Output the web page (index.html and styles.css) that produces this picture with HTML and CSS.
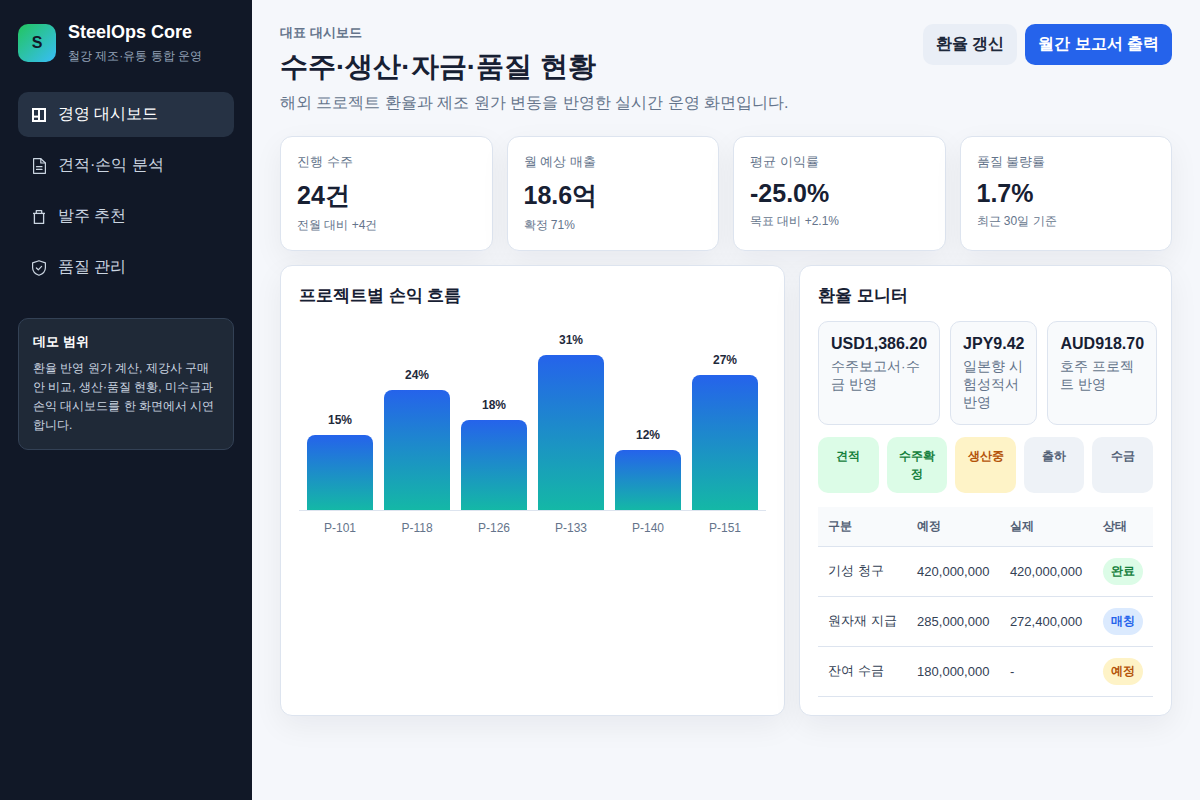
FILE: index.html
```html
<!DOCTYPE html>
<html lang="ko">
<head>
<meta charset="utf-8">
<title>SteelOps Core</title>
<link rel="stylesheet" href="styles.css">
</head>
<body>
<div class="app">
  <aside class="sidebar">
    <div class="brand">
      <div class="logo">S</div>
      <div class="brand-text">
        <div class="brand-name">SteelOps Core</div>
        <div class="brand-sub">철강 제조·유통 통합 운영</div>
      </div>
    </div>
    <nav class="nav">
      <a class="nav-item active">
        <svg class="nav-icon" viewBox="0 0 16 16" fill="none" stroke="currentColor" stroke-width="2"><path d="M2 2h12v12h-12z"/><path d="M8 2v12"/><path d="M2 9.6h6"/></svg>
        <span>경영 대시보드</span>
      </a>
      <a class="nav-item">
        <svg class="nav-icon" viewBox="0 0 16 16" fill="none" stroke="currentColor" stroke-width="1.2" stroke-linejoin="round" stroke-linecap="round"><path d="M2.6 .7h7.2l4.6 4.3v10.3h-11.800z"/><path d="M9.800 .7v4.300h4.600"/><path d="M5.500 8.700h5.500M5.500 11.400h5.500"/></svg>
        <span>견적·손익 분석</span>
      </a>
      <a class="nav-item">
        <svg class="nav-icon" viewBox="0 0 16 16" fill="none" stroke="currentColor" stroke-width="1.3" stroke-linejoin="round"><path d="M2 4.400h12"/><path d="M3.400 4.400v10h9.200v-10"/><path d="M5.300 4.400v-2.800h5.400v2.800"/></svg>
        <span>발주 추천</span>
      </a>
      <a class="nav-item">
        <svg class="nav-icon" viewBox="0 0 16 16" fill="none" stroke="currentColor" stroke-width="1.2" stroke-linejoin="round" stroke-linecap="round"><path d="M8 .7l6.400 2.200v4.800c0 3.400-2.700 6.200-6.400 7.600-3.700-1.400-6.400-4.200-6.400-7.600v-4.800z"/><path d="M5.400 8l1.900 1.800 3.300-3.400"/></svg>
        <span>품질 관리</span>
      </a>
    </nav>
    <div class="note">
      <div class="note-title">데모 범위</div>
      <p class="note-body">환율 반영 원가 계산, 제강사 구매안 비교, 생산·품질 현황, 미수금과 손익 대시보드를 한 화면에서 시연합니다.</p>
    </div>
  </aside>
  <main class="main">
    <header class="header">
      <div class="heading">
        <div class="eyebrow">대표 대시보드</div>
        <h1 class="title">수주·생산·자금·품질 현황</h1>
        <p class="subtitle">해외 프로젝트 환율과 제조 원가 변동을 반영한 실시간 운영 화면입니다.</p>
      </div>
      <div class="actions">
        <button class="btn btn-soft">환율 갱신</button>
        <button class="btn btn-primary">월간 보고서 출력</button>
      </div>
    </header>
    <section class="kpis">
      <div class="card kpi"><div class="kpi-label">진행 수주</div><div class="kpi-value">24건</div><div class="kpi-foot">전월 대비 +4건</div></div>
      <div class="card kpi"><div class="kpi-label">월 예상 매출</div><div class="kpi-value">18.6억</div><div class="kpi-foot">확정 71%</div></div>
      <div class="card kpi"><div class="kpi-label">평균 이익률</div><div class="kpi-value">-25.0%</div><div class="kpi-foot">목표 대비 +2.1%</div></div>
      <div class="card kpi"><div class="kpi-label">품질 불량률</div><div class="kpi-value">1.7%</div><div class="kpi-foot">최근 30일 기준</div></div>
    </section>
    <section class="panels">
      <div class="card panel">
        <h2 class="panel-title">프로젝트별 손익 흐름</h2>
        <div class="chart">
          <div class="bars">
            <div class="bar-col"><span class="bar-value">15%</span><div class="bar" style="height:75px"></div></div>
            <div class="bar-col"><span class="bar-value">24%</span><div class="bar" style="height:120px"></div></div>
            <div class="bar-col"><span class="bar-value">18%</span><div class="bar" style="height:90px"></div></div>
            <div class="bar-col"><span class="bar-value">31%</span><div class="bar" style="height:155px"></div></div>
            <div class="bar-col"><span class="bar-value">12%</span><div class="bar" style="height:60px"></div></div>
            <div class="bar-col"><span class="bar-value">27%</span><div class="bar" style="height:135px"></div></div>
          </div>
          <div class="bar-labels">
            <span>P-101</span><span>P-118</span><span>P-126</span><span>P-133</span><span>P-140</span><span>P-151</span>
          </div>
        </div>
      </div>
      <div class="card panel">
        <h2 class="panel-title">환율 모니터</h2>
        <div class="rates">
          <div class="rate"><div class="rate-value">USD1,386.20</div><div class="rate-note">수주보고서·수금 반영</div></div>
          <div class="rate"><div class="rate-value">JPY9.42</div><div class="rate-note">일본향 시험성적서 반영</div></div>
          <div class="rate"><div class="rate-value">AUD918.70</div><div class="rate-note">호주 프로젝트 반영</div></div>
        </div>
        <div class="stages">
          <div class="stage stage-green">견적</div>
          <div class="stage stage-green">수주확정</div>
          <div class="stage stage-amber">생산중</div>
          <div class="stage stage-gray">출하</div>
          <div class="stage stage-gray">수금</div>
        </div>
        <table class="table">
          <thead>
            <tr><th>구분</th><th>예정</th><th>실제</th><th>상태</th></tr>
          </thead>
          <tbody>
            <tr><td>기성 청구</td><td>420,000,000</td><td>420,000,000</td><td><span class="badge badge-green">완료</span></td></tr>
            <tr><td>원자재 지급</td><td>285,000,000</td><td>272,400,000</td><td><span class="badge badge-blue">매칭</span></td></tr>
            <tr><td>잔여 수금</td><td>180,000,000</td><td>-</td><td><span class="badge badge-amber">예정</span></td></tr>
          </tbody>
        </table>
      </div>
    </section>
  </main>
</div>
</body>
</html>
```
FILE: styles.css
```css
* { box-sizing: border-box; }
html, body { margin: 0; height: 100%; }
body {
  font-family: "Liberation Sans", sans-serif;
  color: #172033;
  background: #f5f7fb;
}
.app { display: grid; grid-template-columns: 252px 1fr; min-height: 800px; }

.sidebar { background: #111827; padding: 22px 18px; color: #fff; }
.brand { display: flex; gap: 12px; align-items: flex-start; margin-bottom: 27px; }
.logo {
  width: 38px; height: 38px; margin-top: 2px; border-radius: 10px;
  background: linear-gradient(135deg, #22c55e, #38bdf8);
  color: #111827; font-weight: 700; font-size: 16px;
  display: flex; align-items: center; justify-content: center;
}
.brand-name { font-size: 18px; font-weight: 700; line-height: 21px; }
.brand-sub { font-size: 12px; color: #94a3b8; margin-top: 5px; line-height: 17px; }

.nav { display: flex; flex-direction: column; gap: 6px; }
.nav-item {
  display: flex; align-items: center; gap: 11px; height: 45px; padding: 0 13px;
  border-radius: 10px; color: #cbd5e1; font-size: 16px;
}
.nav-item.active { background: #263244; color: #fff; }
.nav-icon { width: 16px; height: 16px; flex: none; }

.note {
  margin-top: 28px; padding: 14px; border-radius: 10px;
  background: #1f2937; border: 1px solid #334155;
}
.note-title { font-size: 13px; font-weight: 700; line-height: 18px; margin-bottom: 8px; }
.note-body { margin: 0; font-size: 12px; line-height: 19px; color: #cbd5e1; }

.main { padding: 24px 28px; min-width: 0; }
.header { display: flex; justify-content: space-between; align-items: flex-start; margin-bottom: 21px; }
.eyebrow { font-size: 13px; font-weight: 600; color: #64748b; line-height: 18px; }
.title { margin: 7px 0 6px; font-size: 28px; font-weight: 700; line-height: 36px; color: #172033; }
.subtitle { margin: 0; font-size: 16px; line-height: 24px; color: #64748b; }
.actions { display: flex; gap: 8px; }
.btn { height: 41px; padding: 0 13px; border: 0; border-radius: 10px; font: inherit; font-size: 16px; font-weight: 700; }
.btn-soft { background: #e9eef6; color: #1e293b; }
.btn-primary { background: #2563eb; color: #fff; }

.card { background: #fff; border: 1px solid #dde4ef; border-radius: 12px; box-shadow: 0 10px 30px rgba(15, 23, 42, .06); }
.kpis { display: grid; grid-template-columns: repeat(4, 1fr); gap: 14px; margin-bottom: 14px; }
.kpi { padding: 16px; }
.kpi-label { font-size: 13px; color: #64748b; line-height: 18px; }
.kpi-value { font-size: 25px; font-weight: 700; margin: 8px 0 5px; color: #172033; }
.kpi-foot { font-size: 12px; color: #64748b; line-height: 17px; }

.panels { display: grid; grid-template-columns: 1.354fr 1fr; gap: 14px; }
.panel { padding: 18px; min-width: 0; }
.panel-title { margin: 0 0 13px; font-size: 17px; font-weight: 700; line-height: 24px; color: #172033; }

.chart { margin-top: 25px; }
.bars {
  display: grid; grid-template-columns: repeat(6, 1fr); gap: 11px;
  padding: 0 8px; border-bottom: 1px solid #dde4ef; align-items: end;
}
.bar-col { display: flex; flex-direction: column; align-items: center; gap: 7px; }
.bar-value { font-size: 12px; font-weight: 700; line-height: 15px; color: #1e293b; }
.bar { width: 100%; border-radius: 8px 8px 0 0; background: linear-gradient(180deg, #2563eb, #14b8a6); }
.bar-labels {
  display: grid; grid-template-columns: repeat(6, 1fr); gap: 11px; padding: 10px 8px 0;
  font-size: 12px; line-height: 15px; color: #64748b; text-align: center;
}

.rates { display: grid; grid-template-columns: repeat(3, 1fr); gap: 10px; margin-bottom: 12px; }
.rate { padding: 12px; background: #f8fafc; border: 1px solid #dde4ef; border-radius: 10px; }
.rate-value { font-size: 16px; font-weight: 700; line-height: 20px; color: #172033; margin-bottom: 4px; }
.rate-note { font-size: 13.5px; line-height: 18px; color: #64748b; }

.stages { display: grid; grid-template-columns: repeat(5, 1fr); gap: 8px; margin-bottom: 14px; }
.stage { padding: 10px 8px; min-height: 56px; border-radius: 10px; font-size: 12px; font-weight: 700; line-height: 18px; text-align: center; }
.stage-green { background: #dcfce7; color: #15803d; }
.stage-amber { background: #fef3c7; color: #b45309; }
.stage-gray { background: #eef2f7; color: #526075; }

.table { width: 100%; border-collapse: collapse; font-size: 13px; }
.table th { background: #f8fafc; font-size: 12px; font-weight: 700; color: #526075; text-align: left; padding: 0 10px; height: 39px; border-bottom: 1px solid #dde4ef; }
.table td { height: 50px; padding: 0 10px; border-bottom: 1px solid #dde4ef; color: #334155; }
.badge { display: inline-block; vertical-align: middle; padding: 0 8px; height: 27px; line-height: 27px; border-radius: 999px; font-size: 12px; font-weight: 700; }
.badge-green { background: #dcfce7; color: #15803d; }
.badge-blue { background: #dbeafe; color: #2563eb; }
.badge-amber { background: #fef3c7; color: #b45309; }
```
